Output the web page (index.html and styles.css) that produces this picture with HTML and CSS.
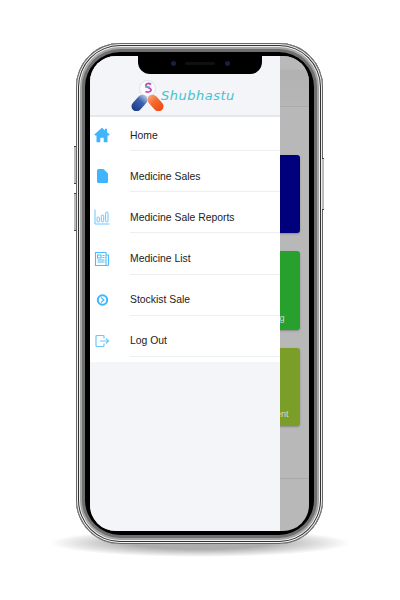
FILE: index.html
```html
<!DOCTYPE html>
<html lang="en">
<head>
  <meta charset="UTF-8" />
  <title>Shubhastu</title>
  <link rel="stylesheet" href="styles.css">
</head>
<body>
  <div class="phone">
    <span class="phone-btn btn-left-1"></span>
    <span class="phone-btn btn-left-2"></span>
    <span class="phone-btn btn-right"></span>
    <div class="screen">
      <div class="app">
        <div class="app-top"></div>
        <div class="card card-blue"></div>
        <div class="card card-green">Billing</div>
        <div class="card card-olive">Payment</div>
        <div class="app-foot"></div>
      </div>

      <nav class="drawer">
        <div class="drawer-head">
          <svg class="logo" width="33" height="36" viewBox="0 0 33 36">
            <defs>
              <linearGradient id="pillBlue" x1="0" y1="0" x2="0" y2="1">
                <stop offset="0" stop-color="#b9c8e6"/>
                <stop offset=".4" stop-color="#3c62ad"/>
                <stop offset="1" stop-color="#1c3a86"/>
              </linearGradient>
              <linearGradient id="pillOrange" x1="0" y1="0" x2="0" y2="1">
                <stop offset="0" stop-color="#f7a276"/>
                <stop offset=".45" stop-color="#f4672a"/>
                <stop offset="1" stop-color="#ec4a18"/>
              </linearGradient>
            </defs>
            <circle cx="16.500" cy="13.500" r="8" fill="#fbfbfd" stroke="#dde1e8"/>
            <path d="M20 9.500c-2-1.800-5.500-1-5 1.300.5 2 4.500 1.500 5 3.700.4 2-3 3.300-5.500 2" fill="none" stroke="#c64cb6" stroke-width="1.800"/>
            <path d="M14 12h5" stroke="#3fbfd0" stroke-width="1.300"/>
            <rect x="-5" y="-9.500" width="10" height="19" rx="5" transform="translate(8.500 28) rotate(42)" fill="url(#pillBlue)"/>
            <rect x="-5" y="-9.500" width="10" height="19" rx="5" transform="translate(24.500 28) rotate(-42)" fill="url(#pillOrange)"/>
          </svg>
          <span class="logo-text">Shubhastu</span>
        </div>
        <ul class="menu">
          <li class="menu-item">
            <svg class="icon" width="16" height="16" viewBox="0 0 16 16"><path d="M8 .8 .3 7.600l.9 1h1.300V15.300h3.800v-4.600h3.400v4.600h3.800V8.600h1.300l.9-1-2.700-2.400V1.800h-2v1.600z" fill="#3fb4ff"/></svg>
            <span class="menu-label">Home</span>
          </li>
          <li class="menu-item">
            <svg class="icon" width="16" height="16" viewBox="0 0 16 16"><path d="M4.500 1H9.500L14 5.500V13.500a1.500 1.500 0 0 1-1.500 1.500h-8A1.500 1.500 0 0 1 3 13.500V2.500A1.500 1.500 0 0 1 4.500 1z" fill="#3fb4ff"/></svg>
            <span class="menu-label">Medicine Sales</span>
          </li>
          <li class="menu-item">
            <svg class="icon" width="16" height="16" viewBox="0 0 16 16" fill="none" stroke="#5cc0fd" stroke-width=".9"><path d="M1 .5v14.500h14.500"/><rect x="3" y="8" width="2.400" height="5" rx="1.200"/><rect x="7.300" y="6" width="2.400" height="7" rx="1.200"/><rect x="11.600" y="3" width="2.400" height="10" rx="1.200"/></svg>
            <span class="menu-label">Medicine Sale Reports</span>
          </li>
          <li class="menu-item">
            <svg class="icon" width="16" height="16" viewBox="0 0 16 16" fill="none" stroke="#4cbbff" stroke-width="1.100"><path d="M1.500 1.500h10.500v13H1.500zM12 4h2.500v9.500a1 1 0 0 1-1 1H12"/><path d="M3.500 4h3.500v3H3.500zM8.500 4.500h2M8.500 6.500h2M3.500 9h7M3.500 11h7"/></svg>
            <span class="menu-label">Medicine List</span>
          </li>
          <li class="menu-item">
            <svg class="icon" width="16" height="16" viewBox="0 0 16 16" fill="none" stroke="#3fb4ff"><circle cx="8.500" cy="8" r="4.700" stroke-width="2"/><path d="M7 5.500 10 8 7 10.500" stroke-width="1.100"/></svg>
            <span class="menu-label">Stockist Sale</span>
          </li>
          <li class="menu-item">
            <svg class="icon" width="16" height="16" viewBox="0 0 16 16" fill="none" stroke="#6cc7ff" stroke-width="1.200"><path d="M10 5.500V3.500a1 1 0 0 0-1-1H3a1 1 0 0 0-1 1v9a1 1 0 0 0 1 1h6a1 1 0 0 0 1-1V10.500M6 8h8.500M12 5.500 14.500 8 12 10.500"/></svg>
            <span class="menu-label">Log Out</span>
          </li>
        </ul>
      </nav>

      <div class="notch">
        <span class="camera"></span>
        <span class="speaker"></span>
        <span class="camera"></span>
      </div>
    </div>
  </div>
  <div class="phone-shadow"></div>
</body>
</html>
```

FILE: styles.css
```css
body {
  margin: 0;
  background-color: #fff;
  font-family: "Liberation Sans", Arial, sans-serif;
  color: #222;
  overflow: hidden;
}

.phone {
  position: relative;
  z-index: 1;
  box-sizing: border-box;
  width: 247px;
  height: 501px;
  margin: 43px 0 0 76px;
  padding: 13px 14px;
  border-radius: 44px;
  background-color: #000;
  box-shadow:
    inset 0 0 0 1px #666,
    inset 0 0 0 2px #f0f0f0,
    inset 0 0 0 3px #333,
    inset 0 0 0 4px #eee,
    inset 0 0 0 6px #a5a5a5,
    inset 0 0 0 9px #6f6f6f;
}

.phone-btn {
  position: absolute;
  width: 2px;
  background-color: #bdbdbd;
  box-shadow: 0 -1px 0 #444, 0 1px 0 #444;
}

.btn-left-1 { left: -2px; top: 104px; height: 36px; }
.btn-left-2 { left: -2px; top: 151px; height: 36px; }
.btn-right { right: -1px; top: 116px; height: 50px; }

.phone-shadow {
  width: 300px;
  height: 28px;
  margin: -15px 0 0 50px;
  border-radius: 50%;
  background: radial-gradient(closest-side, #adadad 45%, rgba(255,255,255,0));
}

.screen {
  position: relative;
  height: 100%;
  overflow: hidden;
  border-radius: 26px;
  background-color: #b8b8b8;
}

.app-top {
  height: 50px;
  margin-bottom: 48px;
  border-bottom: 1px solid #aaaaaa;
  background: linear-gradient(#b9b9b9 25%, #b2b2b2 30%, #b6b6b6);
}

.card {
  box-sizing: border-box;
  display: flex;
  align-items: flex-end;
  justify-content: flex-end;
  margin: 0 9.5px 0 20px;
  padding: 0 10px 7px 0;
  border-radius: 3px;
  box-shadow: 0 1px 2px rgba(0,0,0,0.25);
  color: #d8d8d8;
  font-size: 9px;
}

.card-blue { height: 78px; margin-bottom: 18px; background-color: #00007c; }
.card-green { height: 79px; margin-bottom: 18px; padding-right: 15px; background-color: #28a02e; }
.card-olive { height: 78px; margin-bottom: 0; padding-right: 11px; background-color: #7a9e28; }

.app-foot {
  margin-top: 52px;
  border-top: 1px solid #a9a9a9;
}

.drawer {
  position: absolute;
  top: 0;
  bottom: 0;
  left: 0;
  width: 190px;
  background-color: #f3f5f9;
}

.drawer-head {
  box-sizing: border-box;
  display: flex;
  align-items: flex-end;
  height: 61px;
  padding: 0 0 3px 41px;
  border-bottom: 2px solid #e6e7ea;
}

.logo {
  flex: none;
  margin-bottom: 1px;
}

.logo-text {
  margin: 0 0 9px -3px;
  color: #45c2cb;
  font-family: "DejaVu Sans", sans-serif;
  font-size: 13px;
  font-style: italic;
  letter-spacing: 0.5px;
}

.menu {
  margin: 0;
  padding: 0 0 5px;
  list-style: none;
  background-color: #fff;
}

.menu-item {
  display: flex;
  align-items: flex-end;
  height: 41.2px;
}

.menu-item:first-child {
  height: 34px;
}

.icon {
  flex: none;
  margin: 0 20px 8px 4px;
}

.menu-label {
  flex: 1;
  box-sizing: border-box;
  display: flex;
  align-items: center;
  height: 31px;
  border-bottom: 1px solid #eeeeee;
  font-size: 10.4px;
}

.notch {
  position: absolute;
  top: 0;
  left: 48px;
  display: flex;
  align-items: center;
  justify-content: center;
  gap: 9.5px;
  box-sizing: border-box;
  width: 124px;
  height: 18px;
  padding-bottom: 4px;
  border-radius: 0 0 12px 12px;
  background-color: #000;
}

.camera {
  width: 5px;
  height: 5px;
  border-radius: 50%;
  background-color: #14213f;
}

.speaker {
  width: 30px;
  height: 3px;
  border-radius: 2px;
  background-color: #101010;
}
```
